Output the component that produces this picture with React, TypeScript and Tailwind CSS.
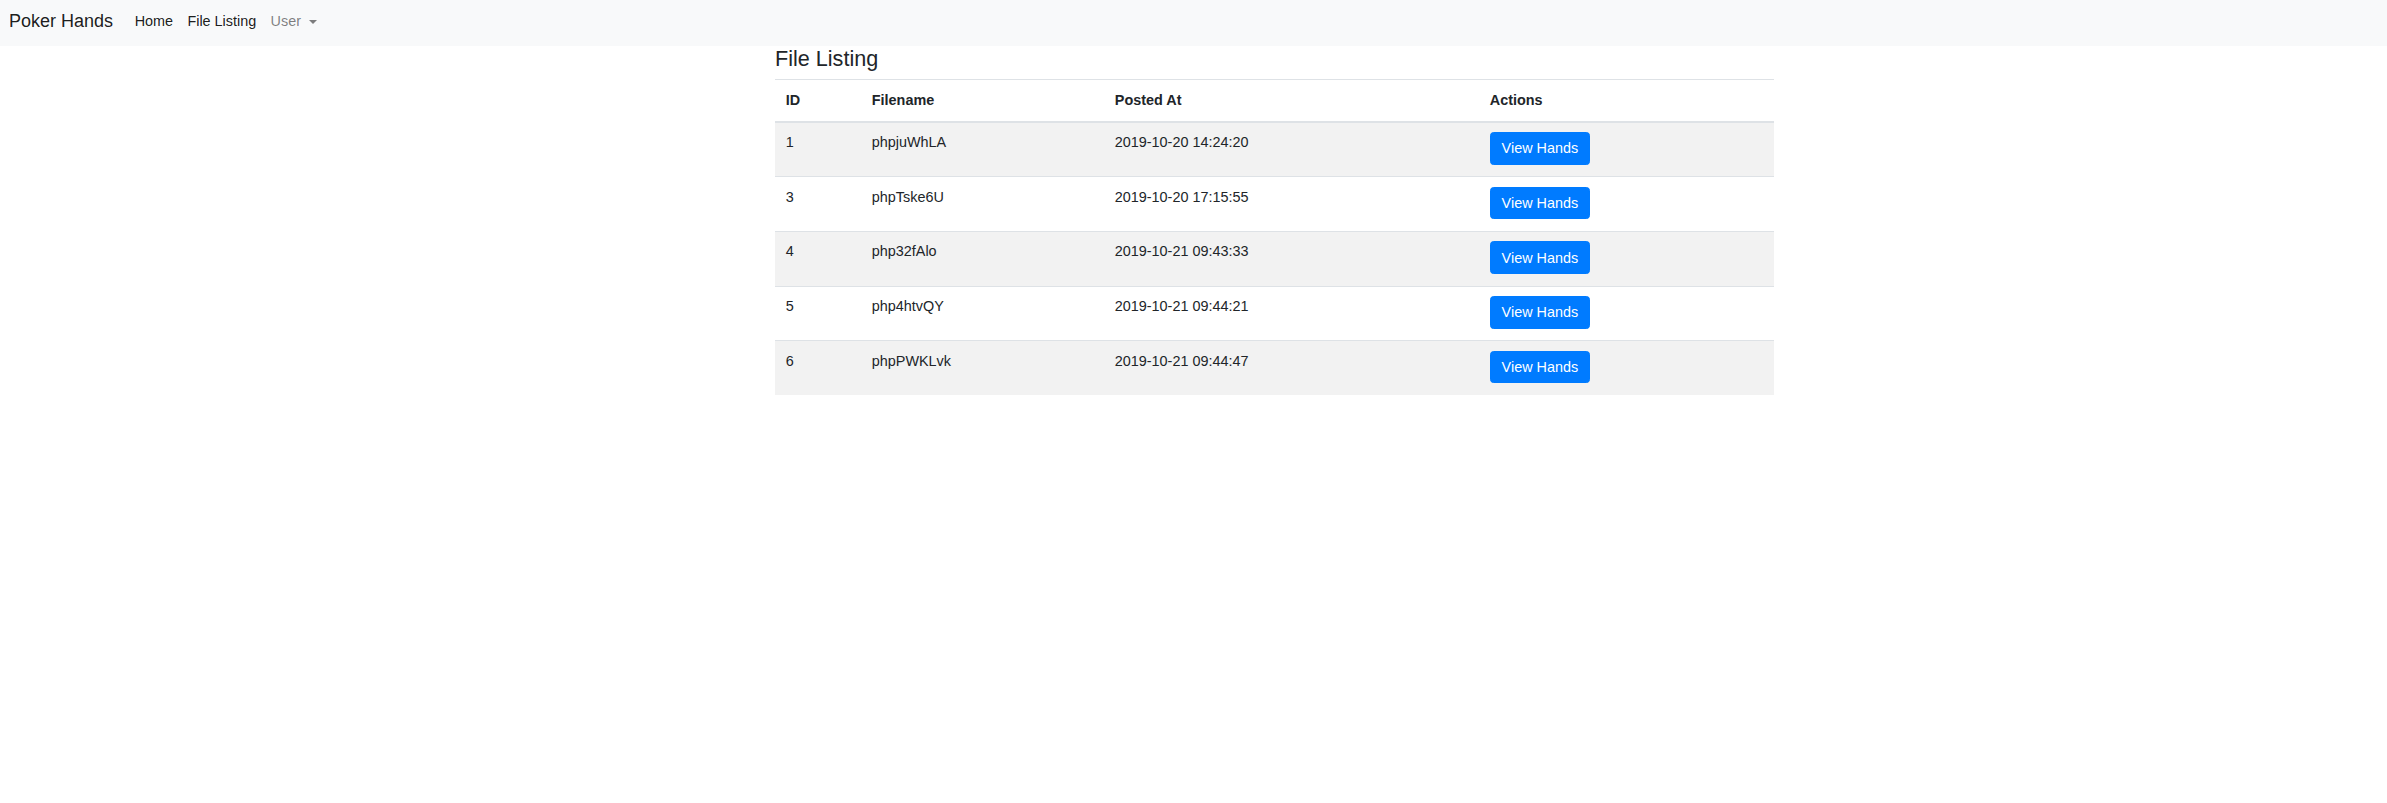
import React from "react";

const files = [
  { id: 1, name: "phpjuWhLA", posted: "2019-10-20 14:24:20" },
  { id: 3, name: "phpTske6U", posted: "2019-10-20 17:15:55" },
  { id: 4, name: "php32fAlo", posted: "2019-10-21 09:43:33" },
  { id: 5, name: "php4htvQY", posted: "2019-10-21 09:44:21" },
  { id: 6, name: "phpPWKLvk", posted: "2019-10-21 09:44:47" },
];

function Navbar() {
  return (
    <nav className="flex h-[46px] items-center bg-[#f8f9fa] pb-[4px] pl-[9px]">
      <span className="mr-[14.4px] text-[18px] leading-none text-black/90">Poker Hands</span>
      <div className="flex text-[14.4px] leading-none">
        <a href="#" className="px-[7.2px] text-black/90">
          Home
        </a>
        <a href="#" className="px-[7.2px] text-black/90">
          File Listing
        </a>
        <a href="#" className="flex items-center px-[7.2px] text-black/50">
          User
          {/* dropdown caret */}
          <span className="ml-[8px] mt-[1px] inline-block h-0 w-0 border-x-[4.5px] border-t-[4.5px] border-x-transparent border-t-black/50" />
        </a>
      </div>
    </nav>
  );
}

export default function App() {
  return (
    <div
      className="min-h-screen bg-white text-[14.4px] leading-[1.5] text-[#212529]"
      style={{ fontFamily: '"Liberation Sans", Arial, sans-serif' }}
    >
      <Navbar />

      <main className="ml-[775px] w-[999px]">
        <h4 className="mb-[7.2px] text-[21.6px] leading-[1.2] font-medium">File Listing</h4>

        <table className="w-full border-collapse">
          <thead>
            <tr>
              <th className="w-[86px] border-t border-b-2 border-[#dee2e6] px-[10.8px] pt-[9.8px] pb-[9.3px] text-left align-bottom font-bold">
                ID
              </th>
              <th className="w-[243px] border-t border-b-2 border-[#dee2e6] px-[10.8px] pt-[9.8px] pb-[9.3px] text-left align-bottom font-bold">
                Filename
              </th>
              <th className="w-[375px] border-t border-b-2 border-[#dee2e6] px-[10.8px] pt-[9.8px] pb-[9.3px] text-left align-bottom font-bold">
                Posted At
              </th>
              <th className="w-[295px] border-t border-b-2 border-[#dee2e6] px-[10.8px] pt-[9.8px] pb-[9.3px] text-left align-bottom font-bold">
                Actions
              </th>
            </tr>
          </thead>
          <tbody>
            {files.map((f, i) => (
              <tr key={f.id} className={i % 2 === 0 ? "bg-[#f2f2f2]" : ""}>
                <td className="border-t border-[#dee2e6] px-[10.8px] pt-[9.5px] pb-[11.6px] align-top">{f.id}</td>
                <td className="border-t border-[#dee2e6] px-[10.8px] pt-[9.5px] pb-[11.6px] align-top">{f.name}</td>
                <td className="border-t border-[#dee2e6] px-[10.8px] pt-[9.5px] pb-[11.6px] align-top">{f.posted}</td>
                <td className="border-t border-[#dee2e6] px-[10.8px] pt-[9.5px] pb-[11.6px] align-top">
                  <button className="flex h-[32.5px] items-center rounded-[3.6px] border border-[#007bff] bg-[#007bff] px-[10.8px] leading-none text-white">
                    View Hands
                  </button>
                </td>
              </tr>
            ))}
          </tbody>
        </table>
      </main>
    </div>
  );
}
